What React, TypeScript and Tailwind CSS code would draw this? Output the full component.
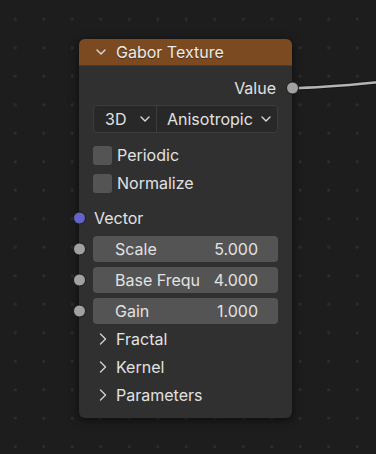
const font = { fontFamily: "Inter, 'Noto Sans', sans-serif" };

function ChevronDown({ className }: { className?: string }) {
  return (
    <svg width="10" height="6" viewBox="0 0 10 6" className={className}>
      <polyline points="1,1 5,5 9,1" fill="none" stroke="#d8d8d8" strokeWidth="1.4" strokeLinecap="round" strokeLinejoin="round" />
    </svg>
  );
}

function ChevronRight() {
  return (
    <svg width="8" height="12" viewBox="0 0 8 12" className="shrink-0">
      <polyline points="1.5,1 6.5,6 1.5,11" fill="none" stroke="#d0d0d0" strokeWidth="1.4" strokeLinecap="round" strokeLinejoin="round" />
    </svg>
  );
}

function Socket({ color, side }: { color: string; side: "left" | "right" }) {
  return (
    <span
      className={
        "absolute top-1/2 -translate-y-1/2 w-[13px] h-[13px] rounded-full border border-[#1a1a1a] " +
        (side === "left" ? "left-[-6.5px]" : "right-[-6.5px]")
      }
      style={{ backgroundColor: color }}
    />
  );
}

function Field({ label, value }: { label: string; value: string }) {
  return (
    <div className="relative h-[26px]">
      <Socket color="#a1a1a1" side="left" />
      <div className="mx-[14px] h-full rounded-[4px] bg-[#545454] flex items-center justify-between pl-[22px] pr-[20px] text-[16px] text-[#e2e2e2]">
        <span>{label}</span>
        <span>{value}</span>
      </div>
    </div>
  );
}

function Checkbox({ label }: { label: string }) {
  return (
    <div className="h-[22px] flex items-center px-[14px] gap-[5px]">
      <span className="w-[19px] h-[19px] rounded-[3px] bg-[#545454] shrink-0" />
      <span className="text-[16px] text-[#e2e2e2]">{label}</span>
    </div>
  );
}

function Panel({ label }: { label: string }) {
  return (
    <div className="h-[28px] flex items-center pl-[20px] gap-[9px] text-[16px] text-[#e2e2e2]">
      <ChevronRight />
      <span>{label}</span>
    </div>
  );
}

export default function App() {
  return (
    <div
      className="relative w-[376px] h-[454px] overflow-hidden bg-[#1d1d1d] bg-[radial-gradient(circle,#2d2d2d_1.2px,transparent_1.8px)] bg-[length:28.5px_28.5px] bg-[position:1px_5px]"
      style={font}
    >
      <svg className="absolute inset-0" width="376" height="454">
        <path d="M292 88 C 322 88, 350 85, 380 82" fill="none" stroke="#151515" strokeWidth="4.5" />
        <path d="M292 88 C 322 88, 350 85, 380 82" fill="none" stroke="#b4b4b4" strokeWidth="2.5" />
      </svg>

      <div className="absolute left-[79px] top-[39px] w-[213px] rounded-[6px] bg-[#303030] shadow-[0_2px_10px_rgba(0,0,0,0.6)] pb-[9px]">
        <div className="h-[27px] rounded-t-[6px] bg-[#7c4a20] border-b border-[#5b3617] flex items-center pl-[17px] gap-[10px]">
          <ChevronDown />
          <span className="text-[16px] text-[#ececec] [text-shadow:0_1px_1px_rgba(0,0,0,0.4)]">Gabor Texture</span>
        </div>

        <div className="relative mt-[10px] h-[24px] flex items-center justify-end pr-[16px] text-[16px] text-[#e2e2e2]">
          <span>Value</span>
          <Socket color="#a1a1a1" side="right" />
        </div>

        <div className="mt-[5px] mx-[14px] h-[28px] flex rounded-[4px] border border-[#3c3c3c] bg-[#282828] text-[16px] text-[#e2e2e2]">
          <div className="w-[63px] flex items-center justify-between pl-[11px] pr-[6px] border-r border-[#3c3c3c]">
            <span>3D</span>
            <ChevronDown />
          </div>
          <div className="flex-1 flex items-center justify-between pl-[10px] pr-[6px]">
            <span>Anisotropic</span>
            <ChevronDown />
          </div>
        </div>

        <div className="mt-[11px]">
          <Checkbox label="Periodic" />
        </div>
        <div className="mt-[6px]">
          <Checkbox label="Normalize" />
        </div>

        <div className="relative mt-[12px] h-[24px] flex items-center pl-[15px] text-[16px] text-[#e2e2e2]">
          <Socket color="#6363c7" side="left" />
          <span>Vector</span>
        </div>

        <div className="mt-[6px] flex flex-col gap-[5px]">
          <Field label="Scale" value="5.000" />
          <Field label="Base Frequ" value="4.000" />
          <Field label="Gain" value="1.000" />
        </div>

        <div className="mt-[1px]">
          <Panel label="Fractal" />
          <Panel label="Kernel" />
          <Panel label="Parameters" />
        </div>
      </div>
    </div>
  );
}
